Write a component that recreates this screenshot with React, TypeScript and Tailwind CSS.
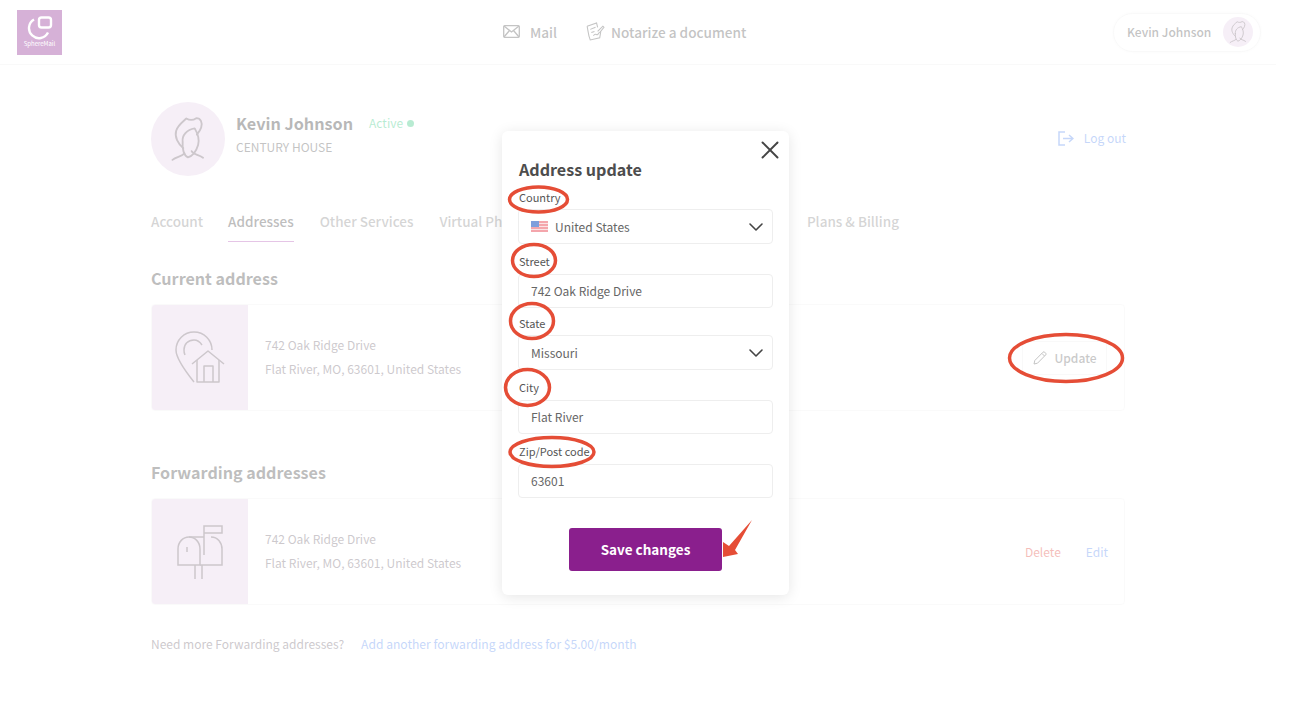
import { ChevronDown, X } from "lucide-react";
import type { ReactNode } from "react";

const PURPLE = "#8a1f8d";

function PersonIcon({ height }: { height: number }) {
  return (
    <svg width={height * 0.74} height={height} viewBox="500 335 115 155" fill="none" stroke="#6f5f6c" strokeWidth="6" strokeLinecap="round" strokeLinejoin="round">
      <path d="M543 442C526 428 514 406 520 386 525 368 540 358 553 346 563 352 575 352 585 345 600 345 606 360 601 375 598 385 592 392 587 398" />
      <path d="M541 422C538 400 555 382 580 378 590 395 596 415 591 432 585 452 572 468 558 472 545 466 539 445 541 422Z" />
      <path d="M508 480C520 470 536 470 546 460" />
      <path d="M607 473C592 462 576 464 570 452" />
    </svg>
  );
}

function HomePinIcon() {
  return (
    <svg width="50" height="54" viewBox="0 0 50 54" fill="none" stroke="#6f5f6c" strokeWidth="1.5" strokeLinejoin="round">
      <path d="M19 51C11 41 1 28 1 19 1 9 9 1 19 1s18 8 18 18" />
      <path d="M10 24a11 11 0 0 1-1-5C9 13 13 9 19 9c4 0 6 2 8 5" />
      <path d="M17 33 33 20l16 13" />
      <path d="M22 29v22h22V29" />
      <path d="M29 51V35h9v16" />
    </svg>
  );
}

function MailboxIcon() {
  return (
    <svg width="48" height="54" viewBox="0 0 48 54" fill="none" stroke="#6f5f6c" strokeWidth="1.5">
      <path d="M2 40V24c0-7 5-12 11-12s11 5 11 12v16z" />
      <path d="M13 12h15M35 12c7 0 11 6 11 12v16H24" />
      <path d="M28 30V1h18v7H28" />
      <path d="M11 22v5" />
      <path d="M19 40v14M26 40v14" />
    </svg>
  );
}

function Flag() {
  return (
    <svg width="17" height="11" viewBox="0 0 17 11">
      <rect width="17" height="11" fill="#f4a6ac" />
      <rect y="2" width="17" height="1" fill="#fbe3e4" />
      <rect y="5" width="17" height="1" fill="#fbe3e4" />
      <rect y="8" width="17" height="1" fill="#fbe3e4" />
      <rect width="8" height="6" fill="#7f9fdc" />
    </svg>
  );
}

function Field({ label, value, select, flag, wrap, gap }: { label: string; value: string; select?: boolean; flag?: boolean; wrap: string; gap: string }) {
  return (
    <div className={wrap}>
      <div className="pl-[1px] text-[11px] leading-[16px] text-[#555555]">{label}</div>
      <div className={`${gap} flex ${select ? "h-[35px]" : "h-[34px]"} items-center justify-between rounded border border-[#eeeeee] pl-[12px] pr-[4px] text-[12px] text-[#666666]`}>
        <span className="flex items-center gap-[7px]">
          {flag && <Flag />}
          {value}
        </span>
        {select && <ChevronDown size={24} strokeWidth={1.6} className="text-[#444444]" />}
      </div>
    </div>
  );
}

function AddressCard({ icon, children }: { icon: ReactNode; children: ReactNode }) {
  return (
    <div className="flex h-[107px] items-center overflow-hidden rounded border border-[#f2f2f2]">
      <div className="flex h-full w-[96px] shrink-0 items-center justify-center bg-[#e5d1e8]">{icon}</div>
      <div className="ml-[17px] pb-[1px] text-[12px] leading-[24px] text-[#6f6570]">
        <div>742 Oak Ridge Drive</div>
        <div>Flat River, MO, 63601, United States</div>
      </div>
      <div className="ml-auto flex items-center">{children}</div>
    </div>
  );
}

export default function App() {
  return (
    <div className="relative h-[726px] w-[1291px] overflow-hidden bg-white font-['Noto_Sans_CJK_SC','Noto_Sans',sans-serif]">
      <header className="flex h-[65px] w-[1276px] items-center border-b border-[#eeeeee] pl-[17px] pr-[15px]">
        <div className="flex h-[45px] w-[45px] flex-col items-center justify-center" style={{ background: PURPLE }}>
          <svg width="26" height="24" viewBox="0 0 26 24" fill="none" stroke="#ffffff" strokeWidth="2.4">
            <path d="M7 3.500a10 10 0 1 0 14 13" />
            <rect x="12" y="1.500" width="12" height="10" rx="2.500" />
          </svg>
          <span className="text-[6px] leading-[8px] text-white">SphereMail</span>
        </div>
        <nav className="ml-[441px] flex items-center text-[13.6px] font-medium text-[#555555]">
          <svg width="17" height="13" viewBox="0 0 17 13" fill="none" stroke="#555555" strokeWidth="1.3">
            <rect x="0.700" y="0.700" width="15.600" height="11.600" rx="1" />
            <path d="M1 1l7.500 6L16 1M1 12l5.500-6.500M16 12l-5.500-6.500" />
          </svg>
          <span className="ml-[10px]">Mail</span>
          <svg className="ml-[28px]" width="20" height="20" viewBox="0 0 19 19" fill="none" stroke="#555555" strokeWidth="1">
            <path d="M2 4l9-3 1 4M2 4c1 4 1 9 3 13l9-2 1-6" />
            <path d="M5 7l5-2M6 10l3-1" />
            <path d="M8 13c2-3 3 0 4-1s1-2 2-2l4-5-1-1-5 5" />
          </svg>
          <span className="ml-[6px]">Notarize a document</span>
        </nav>
        <div className="ml-auto flex h-[39px] w-[148px] items-center justify-between rounded-full border border-[#eeeeee] pl-[13px] pr-[7px] text-[12px] font-medium text-[#555555] shadow-[0_0_3px_rgba(0,0,0,0.06)]">
          Kevin Johnson
          <div className="flex h-[30px] w-[30px] items-center justify-center rounded-full bg-[#e5d1e8]">
            <PersonIcon height={24} />
          </div>
        </div>
      </header>

      <main className="ml-[151px] w-[974px]">
        <section className="mt-[37px] flex h-[74px] items-start">
          <div className="flex h-[74px] w-[74px] items-center justify-center rounded-full bg-[#e5d1e8]">
            <PersonIcon height={48} />
          </div>
          <div className="ml-[11px] mt-[8px]">
            <div className="flex items-center">
              <span className="text-[16.2px] font-semibold leading-[26px] text-[#333333]">Kevin Johnson</span>
              <span className="ml-[16px] text-[12px] text-[#35c77f]">Active</span>
              <span className="ml-[4px] h-[7px] w-[7px] rounded-full bg-[#35c77f]" />
            </div>
            <div className="mt-[1px] text-[12px] leading-[20px] text-[#555555]">CENTURY HOUSE</div>
          </div>
          <div className="ml-auto mt-[27px] flex items-center text-[12px] text-[#5b8def]">
            <svg width="16" height="15" viewBox="0 0 16 15" fill="none" stroke="#5b8def" strokeWidth="1.500">
              <path d="M7 1H1v13h6M5 7.500h10M11 4l4 3.500-4 3.500" />
            </svg>
            <span className="ml-[10px] mr-[-1px]">Log out</span>
          </div>
        </section>

        <nav className="mt-[34px] flex h-[31px] items-start text-[13.5px] font-medium leading-[22px] text-[#888888]">
          <span>Account</span>
          <span className="ml-[25px] border-b border-[#b45ab8] pb-[9px] text-[#444444]">Addresses</span>
          <span className="ml-[26px]">Other Services</span>
          <span className="ml-[26px]">Virtual Phone</span>
          <span className="ml-[280px]">Plans &amp; Billing</span>
        </nav>

        <h2 className="mt-[24px] text-[16.1px] font-semibold leading-[26px] text-[#444444]">Current address</h2>
        <div className="mt-[13px]">
          <AddressCard icon={<HomePinIcon />}>
            <div className="mr-[17px] flex h-[34px] w-[85px] items-center justify-center gap-[8px] rounded border border-[#eeeeee] text-[12px] font-medium text-[#666666]">
              <svg width="14" height="14" viewBox="0 0 14 14" fill="none" stroke="#555555" strokeWidth="1">
                <path d="M1 13l.8-3.500L10 1.200a1.200 1.200 0 0 1 1.700 0l1 1a1.200 1.200 0 0 1 0 1.700L4.500 12.200z" />
                <path d="M9 2.500l2.500 2.500" />
              </svg>
              Update
            </div>
          </AddressCard>
        </div>

        <h2 className="mt-[48px] text-[16.1px] font-semibold leading-[26px] text-[#444444]">Forwarding addresses</h2>
        <div className="mt-[13px]">
          <AddressCard icon={<MailboxIcon />}>
            <span className="text-[12px] text-[#e0453a]">Delete</span>
            <span className="ml-[25px] mr-[16px] text-[12px] text-[#5b8def]">Edit</span>
          </AddressCard>
        </div>

        <p className="mt-[29px] text-[12px] leading-[20px] text-[#6f6570]">
          Need more Forwarding addresses?
          <span className="ml-[17px] text-[12.1px] text-[#5b8def]">Add another forwarding address for $5.00/month</span>
        </p>
      </main>

      <div className="absolute inset-0 bg-white/65" />

      <div className="absolute left-[502px] top-[131px] h-[464px] w-[287px] rounded-md bg-white px-[16px] shadow-[0_2px_14px_rgba(0,0,0,0.1)]">
        <X size={30} strokeWidth={1.500} className="absolute right-[4px] top-[4px] text-[#444444]" />
        <h3 className="pl-[1px] pt-[26px] text-[16.1px] font-semibold leading-[24px] text-[#4d4d4d]">Address update</h3>
        <div className="w-[255px]">
          <Field wrap="mt-[8px]" gap="mt-[4px]" label="Country" value="United States" select flag />
          <Field wrap="mt-[9px]" gap="mt-[5px]" label="Street" value="742 Oak Ridge Drive" />
          <Field wrap="mt-[7px]" gap="mt-[4px]" label="State" value="Missouri" select />
          <Field wrap="mt-[9px]" gap="mt-[5px]" label="City" value="Flat River" />
          <Field wrap="mt-[9px]" gap="mt-[5px]" label="Zip/Post code" value="63601" />
        </div>
        <button className="ml-[51px] mt-[30px] h-[43px] w-[153px] rounded-[3px] text-[13.5px] font-semibold text-white" style={{ background: PURPLE }}>
          Save changes
        </button>
      </div>

      <svg className="pointer-events-none absolute left-0 top-0" width="1291" height="726" fill="none" stroke="#e54d36" strokeWidth="3.500">
        <ellipse cx="538.500" cy="199.500" rx="29" ry="12.500" />
        <ellipse cx="534" cy="260.500" rx="21.500" ry="16" />
        <ellipse cx="532" cy="321" rx="21.500" ry="17.500" />
        <ellipse cx="527.500" cy="387.500" rx="22" ry="18" />
        <ellipse cx="552" cy="452" rx="42" ry="14.500" />
        <ellipse cx="1066" cy="358" rx="56.500" ry="23.500" />
        <path d="M752 520 735 550 738 554 723 557 723 542 729 546Z" fill="#e54d36" stroke="none" />
      </svg>
    </div>
  );
}
